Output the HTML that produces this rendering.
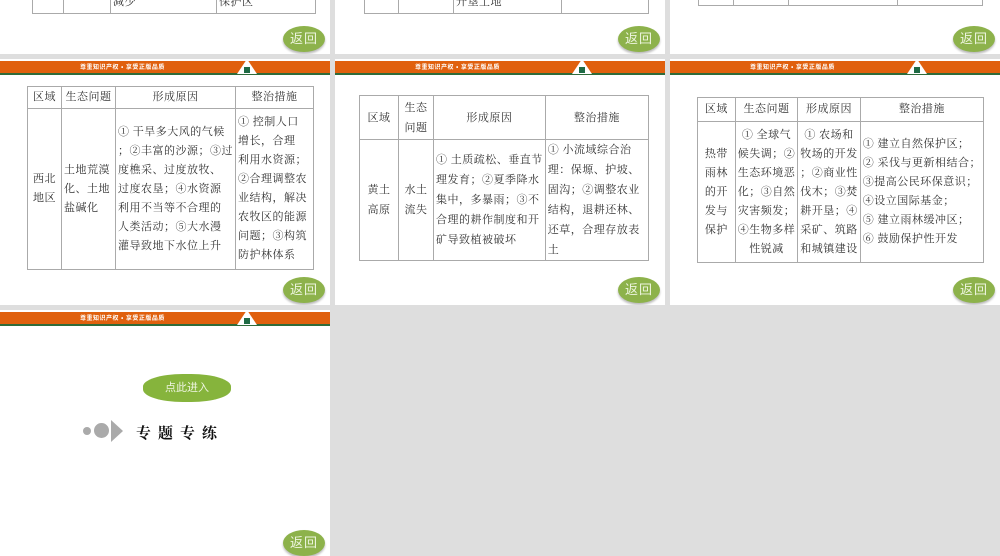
<!DOCTYPE html>
<html><head><meta charset="utf-8"><style>
body{margin:0;width:1000px;height:556px;background:#dedede;position:relative;overflow:hidden;font-family:"Liberation Serif","Noto Serif CJK SC",serif;color:#333}
.s{position:absolute;background:#fff;overflow:hidden}
.ban{position:absolute;left:0;top:2px;width:330px;height:12px;background:#e0600e;border-bottom:2px solid #2f6b3a}
.ban span{position:absolute;left:80px;top:1px;font:bold 6px "Liberation Sans","Noto Sans CJK SC",sans-serif;color:#fff;letter-spacing:0.5px}
.logo{position:absolute;left:237px;top:0;width:0;height:0;border-left:10px solid transparent;border-right:10px solid transparent;border-bottom:15px solid #fff}
.logo i{position:absolute;left:-3px;top:8px;width:6px;height:6px;background:#1f6b45}
.bk{position:absolute;width:42px;height:26px;border-radius:50%;background:#8db24b;color:#eef5e0;font:13px "Liberation Sans","Noto Sans CJK SC",sans-serif;text-align:center;line-height:26px;box-shadow:0 2px 2px #bbb;letter-spacing:1px}
table{position:absolute;border-collapse:collapse;font-size:11px;line-height:17px;white-space:nowrap;letter-spacing:0.5px}
td{border:1px solid #aaa;text-align:center;padding:0 2px;vertical-align:middle}
td.l{text-align:left}
</style></head><body>

<div class="s" style="left:0;top:0;width:330px;height:54px">
<table style="left:32px;top:-10px;width:284px"><tr><td style="width:26px;height:22px"></td><td style="width:42px"></td><td class="l" style="width:101px">减少</td><td class="l">保护区</td></tr></table>
<div class="bk" style="left:283px;top:26px">返回</div></div>
<div class="s" style="left:335px;top:0;width:330px;height:54px">
<table style="left:29px;top:-10px;width:285px"><tr><td style="width:29px;height:22px"></td><td style="width:50px"></td><td class="l" style="width:103px">开垦土地</td><td></td></tr></table>
<div class="bk" style="left:283px;top:26px">返回</div></div>
<div class="s" style="left:670px;top:0;width:330px;height:54px">
<table style="left:28px;top:-14px;width:285px"><tr><td style="width:30px;height:18px"></td><td style="width:50px"></td><td style="width:104px"></td><td class="l" style="font-size:7px">适</td></tr></table>
<div class="bk" style="left:283px;top:26px">返回</div></div>

<div class="s" style="left:0;top:59px;width:330px;height:246px">
<div class="ban"><span>尊重知识产权 • 享受正版品质</span></div><div class="logo"><i></i></div>
<table style="left:27px;top:27px;width:287px;line-height:19px">
<tr><td style="width:29px;height:21px">区域</td><td style="width:49px">生态问题</td><td style="width:110px">形成原因</td><td>整治措施</td></tr>
<tr><td style="height:160px">西北<br>地区</td><td class="l">土地荒漠<br>化、土地<br>盐碱化</td><td class="l">① 干旱多大风的气候<br>；②丰富的沙源；③过<br>度樵采、过度放牧、<br>过度农垦；④水资源<br>利用不当等不合理的<br>人类活动；⑤大水漫<br>灌导致地下水位上升</td><td class="l">① 控制人口<br>增长，合理<br>利用水资源；<br>②合理调整农<br>业结构，解决<br>农牧区的能源<br>问题；③构筑<br>防护林体系</td></tr></table>
<div class="bk" style="left:283px;top:218px">返回</div></div>

<div class="s" style="left:335px;top:59px;width:330px;height:246px">
<div class="ban"><span>尊重知识产权 • 享受正版品质</span></div><div class="logo"><i></i></div>
<table style="left:24px;top:36px;width:290px;line-height:20px">
<tr><td style="width:34px;height:43px">区域</td><td style="width:30px">生态<br>问题</td><td style="width:104px">形成原因</td><td>整治措施</td></tr>
<tr><td style="height:120px">黄土<br>高原</td><td>水土<br>流失</td><td class="l">① 土质疏松、垂直节<br>理发育；②夏季降水<br>集中，多暴雨；③不<br>合理的耕作制度和开<br>矿导致植被破坏</td><td class="l">① 小流域综合治<br>理：保塬、护坡、<br>固沟；②调整农业<br>结构，退耕还林、<br>还草，合理存放表<br>土</td></tr></table>
<div class="bk" style="left:283px;top:218px">返回</div></div>

<div class="s" style="left:670px;top:59px;width:330px;height:246px">
<div class="ban"><span>尊重知识产权 • 享受正版品质</span></div><div class="logo"><i></i></div>
<table style="left:27px;top:38px;width:287px;line-height:19px">
<tr><td style="width:34px;height:23px">区域</td><td style="width:56px">生态问题</td><td style="width:56px">形成原因</td><td>整治措施</td></tr>
<tr><td style="height:140px">热带<br>雨林<br>的开<br>发与<br>保护</td><td>① 全球气<br>候失调；②<br>生态环境恶<br>化；③自然<br>灾害频发；<br>④生物多样<br>性锐减</td><td>① 农场和<br>牧场的开发<br>；②商业性<br>伐木；③焚<br>耕开垦；④<br>采矿、筑路<br>和城镇建设</td><td class="l">① 建立自然保护区；<br>② 采伐与更新相结合；<br>③提高公民环保意识；<br>④设立国际基金；<br>⑤ 建立雨林缓冲区；<br>⑥ 鼓励保护性开发</td></tr></table>
<div class="bk" style="left:283px;top:218px">返回</div></div>

<div class="s" style="left:0;top:310px;width:330px;height:246px">
<div class="ban"><span>尊重知识产权 • 享受正版品质</span></div><div class="logo"><i></i></div>
<div style="position:absolute;left:143px;top:64px;width:88px;height:28px;border-radius:45%;background:#86b43c;color:#eef5e0;font:11px 'Liberation Sans','Noto Sans CJK SC',sans-serif;text-align:center;line-height:28px">点此进入</div>
<div style="position:absolute;left:83px;top:117px;width:8px;height:8px;border-radius:50%;background:#aaa"></div>
<div style="position:absolute;left:94px;top:113px;width:15px;height:15px;border-radius:50%;background:#aaa"></div>
<div style="position:absolute;left:111px;top:110px;border-top:11px solid transparent;border-bottom:11px solid transparent;border-left:12px solid #aaa"></div>
<div style="position:absolute;left:136px;top:112px;font:bold 15px 'Noto Serif CJK SC',serif;color:#111;letter-spacing:7px">专题专练</div>
<div class="bk" style="left:283px;top:220px">返回</div></div>
</body></html>
